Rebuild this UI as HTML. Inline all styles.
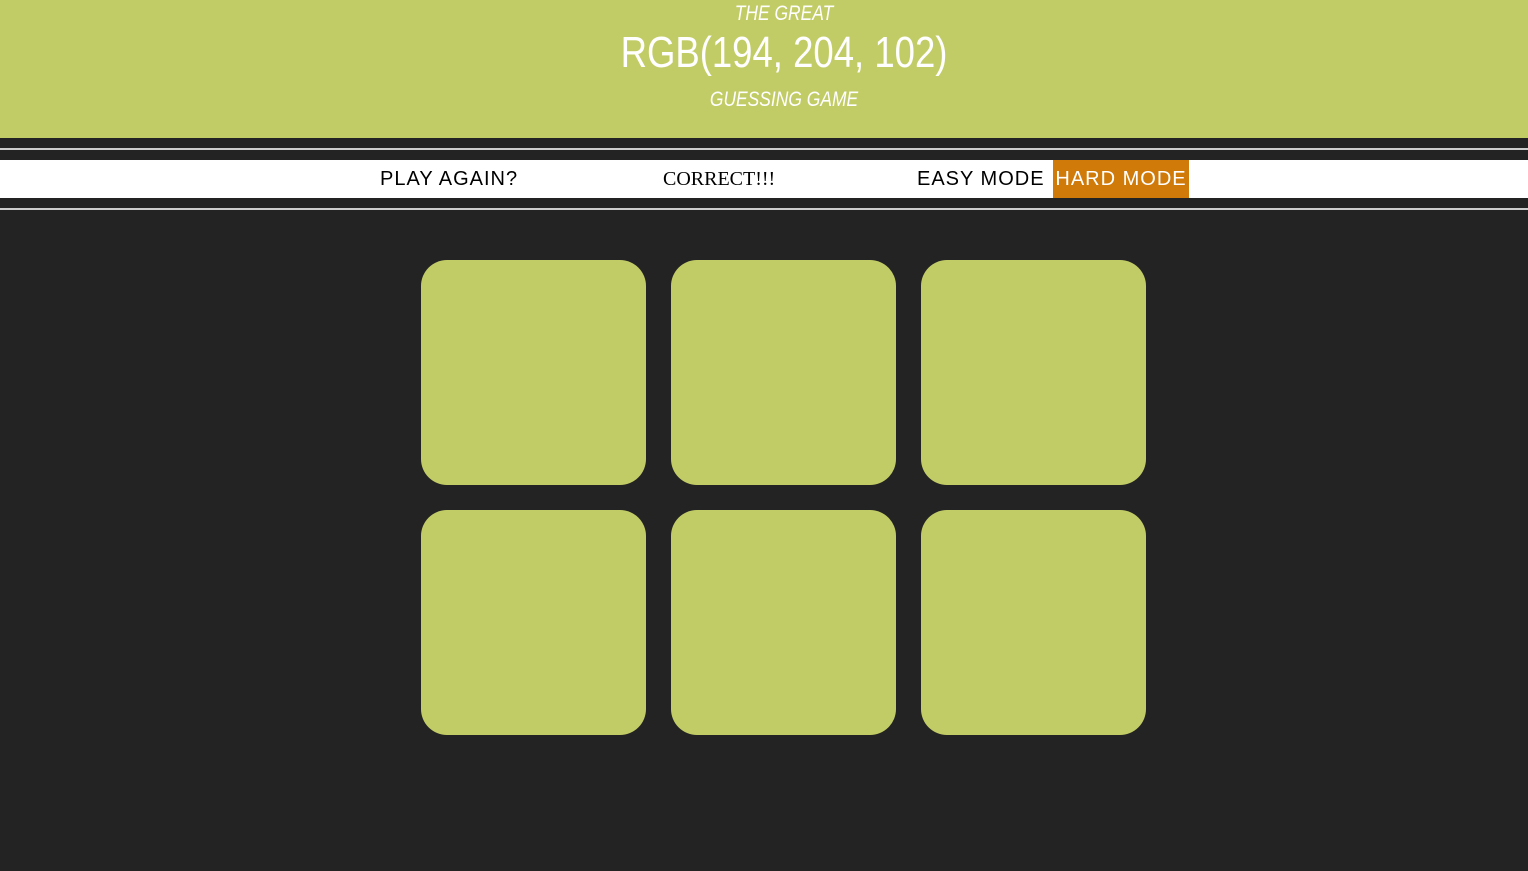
<!DOCTYPE html>
<html><head><style>
body{margin:0;background:#232323;width:1528px;height:871px;overflow:hidden;font-family:"Liberation Sans",sans-serif;}
#h{position:absolute;left:20px;top:0;width:1528px;height:138px;color:#fff;text-align:center;font-family:"Liberation Sans",sans-serif;}
#hb{position:absolute;left:0;top:0;width:1528px;height:138px;background:#c2cc66;}
.l{position:absolute;left:0;width:1528px;height:2px;background:#ccc;}
#nav{position:absolute;left:0;top:160px;width:1528px;height:38px;background:#fff;}
.t{position:absolute;top:0;line-height:38px;font-size:20px;letter-spacing:1px;color:#000;}
.sq{position:absolute;width:225px;height:225px;border-radius:26px;background:#c2cc66;}
.n{transform:scaleX(0.83);}
</style></head><body>
<div id="hb"></div>
<div id="h">
<div class="n" style="position:absolute;top:2px;width:100%;font-size:21px;font-style:italic">THE GREAT</div>
<div class="n" style="position:absolute;top:28px;width:100%;font-size:44px;">RGB(194, 204, 102)</div>
<div class="n" style="position:absolute;top:88px;width:100%;font-size:21px;font-style:italic">GUESSING GAME</div>
</div>
<div class="l" style="top:148px"></div>
<div id="nav">
<div class="t" style="left:380px">PLAY AGAIN?</div>
<div class="t" style="left:663px;font-family:'Liberation Serif',serif;font-size:20px;letter-spacing:0">CORRECT!!!</div>
<div class="t" style="left:917px">EASY MODE</div>
<div class="t" style="left:1053px;width:136px;background:#d07a0a;color:#fff;text-align:center">HARD MODE</div>
</div>
<div class="l" style="top:208px"></div>
<div class="sq" style="left:421px;top:260px"></div>
<div class="sq" style="left:671px;top:260px"></div>
<div class="sq" style="left:921px;top:260px"></div>
<div class="sq" style="left:421px;top:510px"></div>
<div class="sq" style="left:671px;top:510px"></div>
<div class="sq" style="left:921px;top:510px"></div>
</body></html>
